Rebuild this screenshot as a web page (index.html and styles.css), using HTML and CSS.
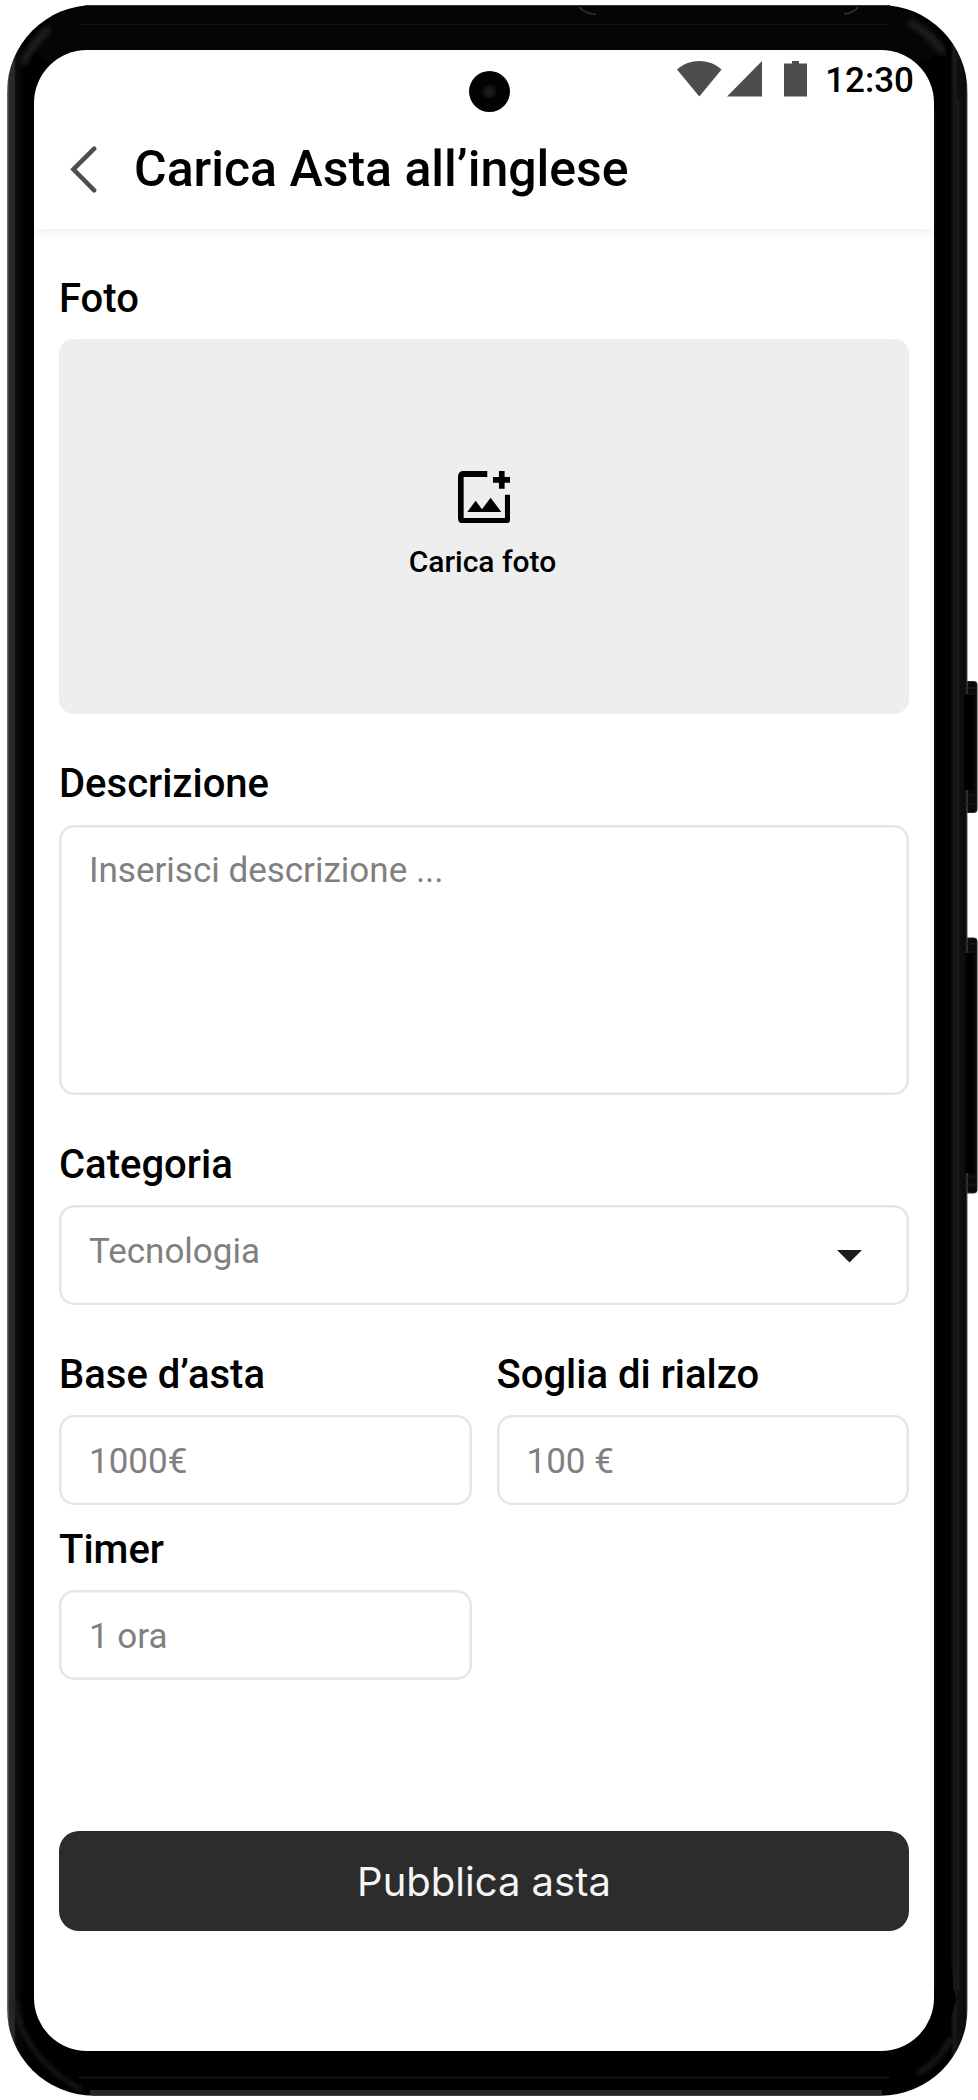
FILE: index.html
```html
<!DOCTYPE html>
<html lang="it">
<head>
<meta charset="utf-8">
<title>Carica Asta all’inglese</title>
<link rel="stylesheet" href="styles.css">
</head>
<body>
<div class="phone">
  <svg class="frame" viewBox="0 0 978 2100" aria-hidden="true">
    <defs>
      <linearGradient id="side" x1="0" x2="1" y1="0" y2="0">
        <stop offset="0" stop-color="#777"/>
        <stop offset="0.0025" stop-color="#292929"/>
        <stop offset="0.0075" stop-color="#292929"/>
        <stop offset="0.009" stop-color="#0c0c0c"/>
        <stop offset="0.02" stop-color="#000"/>
        <stop offset="0.982" stop-color="#000"/>
        <stop offset="0.986" stop-color="#1c1c1c"/>
        <stop offset="0.99" stop-color="#101010"/>
        <stop offset="0.998" stop-color="#0c0c0c"/>
        <stop offset="1" stop-color="#555"/>
      </linearGradient>
      <filter id="soft" x="-30%" y="-30%" width="160%" height="160%"><feGaussianBlur stdDeviation="2.5"/></filter>
    </defs>
    <g fill="#0a0a0a" stroke="#262626">
      <rect x="960" y="681.5" width="17" height="131" rx="3"/>
      <rect x="960" y="938" width="17" height="255" rx="3"/>
    </g>
    <rect x="7" y="5" width="960.5" height="2090.7" rx="87" fill="url(#side)"/>
    <path d="M92 6 H882 C905 6 930 20 946 42 L930 60 H44 L28 42 C44 20 69 6 92 6Z" fill="#050505"/>
    <path d="M85 5.5H890" stroke="#333"/>
    <path d="M80 24.5H890" stroke="#141414"/>
    <path d="M20 1995C28 2048 60 2078 90 2078H880C915 2078 945 2050 956 2000L950 1960H30Z" fill="#000"/>
    <path d="M78 2077.5H890" stroke="#141414" stroke-width="1.5"/>
    <path d="M90 2092.5H882" stroke="#262626" stroke-width="5"/>
    <g fill="none" stroke="#1c1c1c" filter="url(#soft)">
      <path d="M23 64Q33 42 50 28" stroke-width="8"/>
      <path d="M908 22Q931 33 944 54" stroke-width="8"/>
      <path d="M14 2000Q24 2060 82 2090" stroke-width="4"/>
      <path d="M951 2038Q941 2060 917 2074" stroke-width="5"/>
    </g>
    <path d="M579 7Q584 13 596 14.5M858 7Q854 13 844 14" fill="none" stroke="#333" stroke-width="1.5"/>
    <g fill="none" stroke="#141414">
      <path d="M953.5 90V1990M934.8 110V1990"/>
      <path d="M958 100V1990" stroke="#1a1a1a" stroke-width="2.5"/>
    </g>
    <rect x="964.5" y="694" width="9" height="96" fill="#000"/>
    <rect x="965.5" y="953" width="8" height="220" fill="#000"/>
    <path d="M964 688H976M964 694H974M964 795H974M964 804H976M964 944H976M964 952H974M964 1177H974M964 1185H976" stroke="#1c1c1c"/>
  </svg>

  <main class="screen">
    <header class="header">
      <div class="status">
        <svg class="wifi" viewBox="0 0 44.6 36"><path d="M0 8.5C13-2.8 31.6-2.8 44.6 8.5L22.3 35.6Z"/></svg>
        <svg class="signal" viewBox="0 0 35 36"><path d="M35 0V35.5H0Z"/></svg>
        <svg class="battery" viewBox="0 0 23 36"><path d="M8 0H15V2.5H23V35.5H0V2.5H8Z"/></svg>
        <span class="clock">12:30</span>
      </div>
      <span class="camera"></span>
      <div class="titlebar">
        <svg class="back" viewBox="0 0 27 47"><path d="M24.2 2.7L3.4 23.3L24.2 44.3"/></svg>
        <h1 class="title">Carica Asta all’inglese</h1>
      </div>
    </header>

    <form class="form">
      <section class="group group-photo">
        <h2 class="label">Foto</h2>
        <div class="upload">
          <svg class="photo-icon" viewBox="233 91 158 158"><path fill-rule="evenodd" d="M321 91H250Q233 91 233 108V232Q233 249 250 249H374Q391 249 391 232V162H374V232H250V109H321ZM356 91H373V109H391V126H373V144H356V126H338V109H356ZM261 214L286 180L305 206L331 171L363 214Z"/></svg>
          <span class="upload-text">Carica foto</span>
        </div>
      </section>
      <section class="group group-description">
        <h2 class="label">Descrizione</h2>
        <div class="field field-area">Inserisci descrizione ...</div>
      </section>
      <section class="group group-category">
        <h2 class="label">Categoria</h2>
        <div class="field field-select"><span>Tecnologia</span>
          <svg class="caret" viewBox="0 0 25 12.5"><path d="M0 0H25L12.5 12.5Z"/></svg>
        </div>
      </section>
      <div class="pair">
        <section class="group">
          <h2 class="label">Base d’asta</h2>
          <div class="field">1000€</div>
        </section>
        <section class="group">
          <h2 class="label">Soglia di rialzo</h2>
          <div class="field">100 €</div>
        </section>
        <section class="group">
          <h2 class="label">Timer</h2>
          <div class="field">1 ora</div>
        </section>
      </div>
      <button class="submit" type="button">Pubblica asta</button>
    </form>
  </main>
</div>
</body>
</html>
```
FILE: styles.css
```css
* { box-sizing: border-box; }

body {
  margin: 0;
  background: #fff;
  font-family: Roboto, "Liberation Sans", sans-serif;
  color: #000;
}

svg { display: block; flex: none; }

.phone {
  position: relative;
  width: 978px;
  height: 2100px;
  padding: 49.5px 44px 49.5px 34px;
  overflow: hidden;
}

.frame {
  position: absolute;
  inset: 0;
  width: 978px;
  height: 2100px;
}

.screen {
  position: relative;
  width: 900px;
  height: 2001px;
  border-radius: 53px;
  background: #fff;
  overflow: hidden;
}

.header {
  height: 179.5px;
  box-shadow: 0 2.5px 10px rgba(0, 0, 0, 0.07);
}

.status {
  display: flex;
  height: 64px;
  padding: 11.5px 20px 0 0;
  justify-content: flex-end;
  fill: #4d4d4d;
}

.wifi { width: 44.6px; height: 36px; margin-right: 5.2px; }
.signal { width: 35px; height: 36px; margin-right: 22px; }
.battery { width: 23px; height: 36px; margin-right: 18.5px; }

.clock {
  font-size: 35px;
  font-weight: 500;
  line-height: 41px;
  margin-top: -1px;
}

.camera {
  position: absolute;
  top: 21.5px;
  left: 435px;
  width: 41px;
  height: 41px;
  border-radius: 50%;
  background: radial-gradient(circle, #241c1c 0, #151515 5px, #020202 8px);
}

.titlebar {
  display: flex;
  align-items: center;
  height: 111px;
  padding-left: 36px;
}

.back {
  width: 27px;
  height: 47px;
  fill: none;
  stroke: #4d4d4d;
  stroke-width: 4.5;
  stroke-linecap: round;
}

.title {
  margin: 0 0 0 37px;
  font-size: 50px;
  font-weight: 500;
  line-height: 58px;
}

.form {
  display: flex;
  flex-direction: column;
  padding: 46px 25px 0;
}

.group { display: flex; flex-direction: column; }
.group-photo { margin-bottom: 46px; }
.group-description { margin-bottom: 46px; }
.group-category { margin-bottom: 46px; }

.label {
  margin: 0 0 17px;
  font-size: 40px;
  font-weight: 500;
  line-height: 47px;
}

.group-description .label { margin-bottom: 18px; }

.upload {
  display: flex;
  flex-direction: column;
  align-items: center;
  height: 375px;
  padding-top: 131.5px;
  border-radius: 15px;
  background: #eee;
}

.photo-icon { width: 52.6px; height: 52.6px; }

.upload-text {
  margin: 21px 3px 0 0;
  font-size: 30px;
  font-weight: 500;
  line-height: 35px;
}

.field {
  display: flex;
  height: 90px;
  padding: 26px 30px 0;
  border-radius: 15px;
  box-shadow: inset 0 0 0 2.5px #e6e6e6;
  font-size: 35px;
  line-height: 41px;
  color: #808080;
}

.field-area {
  height: 270px;
  padding-top: 25px;
}

.field-select {
  justify-content: space-between;
  height: 100px;
  padding-right: 47.5px;
}

.caret { width: 25px; height: 12.5px; margin-top: 19px; fill: #1d1b20; }

.pair {
  display: grid;
  grid-template-columns: 1fr 1fr;
  gap: 21px 25px;
}

.submit {
  height: 100px;
  margin-top: 150.5px;
  padding: 2px 0 0;
  border: 0;
  border-radius: 20px;
  background: #2c2c2c;
  color: #f5f5f5;
  font: 400 40px/1 Inter, sans-serif;
}
```
